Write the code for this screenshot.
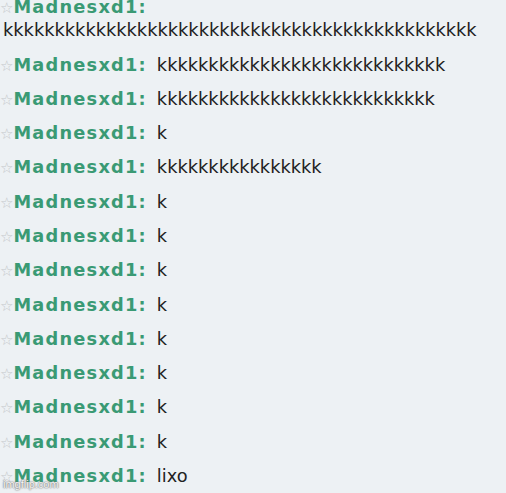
const rows: string[] = [
  "k".repeat(28),
  "k".repeat(27),
  "k",
  "k".repeat(16),
  "k",
  "k",
  "k",
  "k",
  "k",
  "k",
  "k",
  "k",
  "lixo",
];

const Name = () => (
  <span className="whitespace-nowrap">
    <span className="text-[#c4c7ca] text-[15px] leading-[0] font-normal">☆</span>
    <span className="font-bold text-[#3a9a74] tracking-[1.2px]">Madnesxd1:</span>
  </span>
);

export default function App() {
  return (
    <div
      className="relative w-[506px] h-[493px] overflow-hidden bg-[#edf1f4] text-[#222] text-[17.8px] leading-[23px]"
      style={{ fontFamily: '"DejaVu Sans", Verdana, sans-serif' }}
    >
      <div className="-mt-[4.7px]">
        <div className="pb-[5.65px]">
          <div className="h-[23px]">
            <Name />
          </div>
          <div className="pl-[3px] h-[23px] whitespace-nowrap">{"k".repeat(46)}</div>
        </div>
        {rows.map((msg, i) => (
          <div key={i} className="py-[5.65px]">
            <div className="h-[23px] whitespace-nowrap">
              <Name />
              <span className="ml-[10px]">{msg}</span>
            </div>
          </div>
        ))}
      </div>
      <div
        className="absolute left-[3px] top-[478px] text-[11px] leading-[12px] text-[#f6f6f6]"
        style={{
          fontFamily: '"Liberation Sans", Arial, sans-serif',
          textShadow: "0 0 2px #666, 0 0 1px #777",
        }}
      >
        imgflip.com
      </div>
    </div>
  );
}
